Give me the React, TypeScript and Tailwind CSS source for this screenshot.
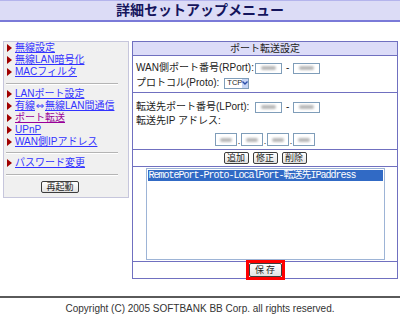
import React from "react";

const jp = "font-['Liberation_Sans','Noto_Sans_CJK_JP',sans-serif]";

function Masked({ w, h }: { w: string; h: string }) {
  return (
    <span className={`${w} ${h} flex items-center justify-center border border-[#7f9db9] bg-white`}>
      <span className="h-[4px] w-[60%] rounded-full bg-[#b8b8b8] blur-[1px]" />
    </span>
  );
}

function Btn({ label, big }: { label: string; big?: boolean }) {
  return (
    <span
      className={`${big ? "w-[33px] h-[14px] tracking-[2px] pl-[2px]" : "w-[25px] h-[12px]"} flex items-center justify-center rounded-[2px] border border-[#3c3c3c] bg-gradient-to-b from-white to-[#e2e2e2] text-[9px] leading-none text-[#222]`}
    >
      {label}
    </span>
  );
}

function NavLink({ label, visited }: { label: React.ReactNode; visited?: boolean }) {
  return (
    <div className="flex h-[12px] items-center">
      <span className="ml-[3px] mr-[3px] h-0 w-0 border-y-[4px] border-l-[5px] border-y-transparent border-l-[#a00000]" />
      <span className={`text-[10px] leading-none underline underline-offset-1 ${visited ? "text-[#990099]" : "text-[#3333ff]"}`}>
        {label}
      </span>
    </div>
  );
}

function Sep({ mt }: { mt: string }) {
  return <div className={`${mt} ml-[2px] h-[2px] w-[112px] border-t border-[#b4b4b4] border-b border-b-white`} />;
}

export default function App() {
  return (
    <div className={`${jp} h-[316px] w-[400px] overflow-hidden bg-white`}>
      {/* header */}
      <div className="flex h-[22px] items-center justify-center border-t border-[#b4b4ec] border-b-2 border-b-[#7a7ad8] bg-[#dcdcf6] text-[14px] font-bold text-[#15155c]">
        詳細セットアップメニュー
      </div>

      <div className="flex items-start gap-[3px] pl-[3px] pt-[19px]">
        {/* left menu */}
        <div className="h-[157px] w-[126px] border border-[#c6c6dc] bg-[#f0f0f0]">
          <NavLink label="無線設定" />
          <NavLink label="無線LAN暗号化" />
          <NavLink label="MACフィルタ" />
          <Sep mt="mt-[5px]" />
          <div className="mt-[3px]">
            <NavLink label="LANポート設定" />
            <NavLink
              label={
                <>
                  有線<span className="inline-block w-[10px] text-center font-['DejaVu_Sans',sans-serif] text-[10px]">⇔</span>無線LAN間通信
                </>
              }
            />
            <NavLink label="ポート転送" visited />
            <NavLink label="UPnP" />
            <NavLink label="WAN側IPアドレス" />
          </div>
          <Sep mt="mt-[4px]" />
          <div className="mt-[3px]">
            <NavLink label="パスワード変更" />
          </div>
          <Sep mt="mt-[5px]" />
          <div className="mt-[5px] pl-[37px]">
            <span className="flex h-[12px] w-[38px] items-center justify-center rounded-[2px] border border-[#3c3c3c] bg-gradient-to-b from-white to-[#e2e2e2] text-[9px] leading-none text-[#222]">
              再起動
            </span>
          </div>
        </div>

        {/* port forwarding panel */}
        <div className="flex h-[238px] w-[266px] flex-col divide-y divide-[#7070c0] border border-[#7070c0] text-[10px] leading-none text-[#222]">
          <div className="flex h-[14px] items-center justify-center bg-[#dcdcf8]">ポート転送設定</div>

          <div className="h-[37px] pl-[3px] pt-[5px]">
            <div className="flex h-[14px] items-center">
              <span className="w-[119px] whitespace-nowrap">WAN側ポート番号(RPort):</span>
              <Masked w="w-[27px]" h="h-[11px]" />
              <span className="mx-[4px]">-</span>
              <Masked w="w-[27px]" h="h-[11px]" />
            </div>
            <div className="mt-[1px] flex h-[14px] items-center gap-[5px]">
              <span>プロトコル(Proto):</span>
              <span className="flex h-[11px] w-[25px] items-center border border-[#7f9db9] bg-white">
                <span className="flex-1 pl-[2px] text-[7.5px] leading-none">TCP</span>
                <span className="flex h-full w-[9px] items-center justify-center bg-[#c6d5f5]">
                  <svg width="6" height="4" viewBox="0 0 6 4">
                    <path d="M0.5 0.5 L3 3 L5.5 0.5" fill="none" stroke="#2b4da8" strokeWidth="1.4" />
                  </svg>
                </span>
              </span>
            </div>
          </div>

          <div className="h-[57px] pl-[3px] pt-[7px]">
            <div className="flex h-[14px] items-center">
              <span className="w-[119px] whitespace-nowrap">転送先ポート番号(LPort):</span>
              <Masked w="w-[27px]" h="h-[11px]" />
              <span className="mx-[4px]">-</span>
              <Masked w="w-[27px]" h="h-[11px]" />
            </div>
            <div className="flex h-[14px] items-center">転送先IP アドレス:</div>
            <div className="mt-[5px] flex items-end justify-center pr-[3px]">
              <Masked w="w-[22px]" h="h-[13px]" />
              <span className="w-[4px] text-center text-[9px]">.</span>
              <Masked w="w-[22px]" h="h-[13px]" />
              <span className="w-[4px] text-center text-[9px]">.</span>
              <Masked w="w-[22px]" h="h-[13px]" />
              <span className="w-[4px] text-center text-[9px]">.</span>
              <Masked w="w-[22px]" h="h-[13px]" />
            </div>
          </div>

          <div className="flex h-[17px] items-center justify-center gap-[4px]">
            <Btn label="追加" />
            <Btn label="修正" />
            <Btn label="削除" />
          </div>

          <div className="flex h-[95px] justify-center pt-[1px]">
            <div className="h-[92px] w-[239px] border border-[#9db4d6] bg-white p-[1px]">
              <div className="flex h-[11px] items-center bg-[#316ac5] pl-[1px] font-['Liberation_Mono','Noto_Sans_CJK_JP',monospace] text-[10px] leading-none tracking-[-1px] text-white">
                RemotePort-Proto-LocalPort-転送先IPaddress
              </div>
            </div>
          </div>

          <div className="flex flex-1 items-center justify-center">
            <span className="outline-[3px] outline-solid outline-[#ff0000]">
              <Btn label="保存" big />
            </span>
          </div>
        </div>
      </div>

      {/* footer */}
      <div className="mt-[17px] h-[2px] w-full bg-[#5a5a5a]" />
      <div className="mt-[6px] text-center font-['Liberation_Sans',sans-serif] text-[10px] leading-none text-[#333]">
        Copyright (C) 2005 SOFTBANK BB Corp. all rights reserved.
      </div>
    </div>
  );
}
